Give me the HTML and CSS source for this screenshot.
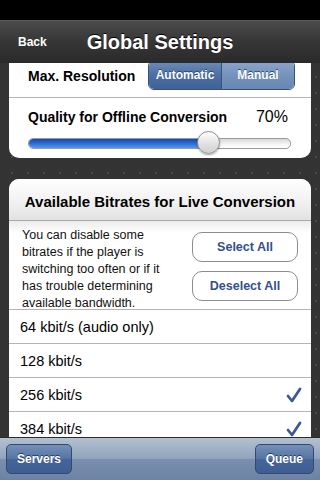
FILE: index.html
```html
<!DOCTYPE html>
<html lang="en">
<head>
    <meta charset="UTF-8">
    <meta name="viewport" content="width=device-width, initial-scale=1.0">
    <title>Global Settings</title>
    <link rel="stylesheet" href="styles.css">
</head>
<body>
    <div class="phone">
        <div class="status-bar"></div>

        <div class="nav-bar">
            <span class="back">Back</span>
            <h1>Global Settings</h1>
        </div>

        <div class="content">
            <div class="scroll">
                <div class="card">
                    <div class="row resolution">
                        <span class="label">Max. Resolution</span>
                        <div class="segmented">
                            <span class="seg selected">Automatic</span>
                            <span class="seg">Manual</span>
                        </div>
                    </div>
                    <div class="row quality">
                        <div class="quality-top">
                            <span class="label">Quality for Offline Conversion</span>
                            <span class="percent">70%</span>
                        </div>
                        <div class="slider">
                            <div class="track-fill" style="width: 69%;"></div>
                            <div class="thumb" style="left: 69%;"></div>
                        </div>
                    </div>
                </div>

                <div class="card bitrates">
                    <div class="card-header">Available Bitrates for Live Conversion</div>
                    <div class="intro">
                        <p>You can disable some<br>bitrates if the player is<br>switching too often or if it<br>has trouble determining<br>available bandwidth.</p>
                        <div class="intro-buttons">
                            <button>Select All</button>
                            <button>Deselect All</button>
                        </div>
                    </div>
                    <div class="item">64 kbit/s (audio only)</div>
                    <div class="item">128 kbit/s</div>
                    <div class="item">256 kbit/s
                        <svg class="check" width="16" height="16" viewBox="0 0 16 16"><path d="M2 9 L6 14 L14 2" fill="none" stroke="#3c5a96" stroke-width="2.8" stroke-linecap="round" stroke-linejoin="round"/></svg>
                    </div>
                    <div class="item">384 kbit/s
                        <svg class="check" width="16" height="16" viewBox="0 0 16 16"><path d="M2 9 L6 14 L14 2" fill="none" stroke="#3c5a96" stroke-width="2.8" stroke-linecap="round" stroke-linejoin="round"/></svg>
                    </div>
                </div>
            </div>
        </div>

        <div class="toolbar">
            <button>Servers</button>
            <button>Queue</button>
        </div>
    </div>
</body>
</html>
```

FILE: styles.css
```css
body {
    margin: 0;
    font-family: "Liberation Sans", Arial, sans-serif;
    background-color: #000000;
}

.phone {
    width: 320px;
    height: 480px;
    display: flex;
    flex-direction: column;
    overflow: hidden;
}

.status-bar {
    height: 20px;
    background-color: #000000;
}

.nav-bar {
    height: 43px;
    display: flex;
    align-items: center;
    justify-content: center;
    position: relative;
    background: linear-gradient(#4b4b4b, #363636 50%, #2a2a2a);
    border-top: 1px solid #5a5a5a;
    box-sizing: border-box;
    color: #ffffff;
}

.back {
    position: absolute;
    left: 18px;
    top: 14px;
    font-size: 12px;
    font-weight: bold;
}

.nav-bar h1 {
    margin: 0;
    font-size: 20px;
    font-weight: bold;
    text-shadow: 0 -1px 0 #000000;
}

.content {
    flex: 1;
    overflow: hidden;
    background-color: #333333;
    background-image: radial-gradient(circle, #4a4a4a 1px, transparent 1.5px);
    background-size: 16px 16px;
    background-position: 4px 6px;
}

.scroll {
    margin-top: -9px;
    padding: 0 9px;
}

.card {
    background-color: #ffffff;
    border-radius: 10px;
    overflow: hidden;
    margin-bottom: 21px;
}

.row {
    border-bottom: 1px solid #b4b4b4;
    box-sizing: border-box;
}

.row:last-child {
    border-bottom: none;
}

.label {
    font-size: 14px;
    font-weight: bold;
    color: #000000;
}

.resolution {
    height: 44px;
    display: flex;
    align-items: center;
    justify-content: space-between;
    padding: 0 16px 0 19px;
}

.segmented {
    display: flex;
    width: 147px;
    height: 30px;
    border: 1px solid #35517c;
    border-radius: 6px;
    overflow: hidden;
    box-sizing: border-box;
    margin-top: -1px;
}

.seg {
    flex: 1;
    display: flex;
    align-items: center;
    justify-content: center;
    font-size: 12px;
    font-weight: bold;
    color: #ffffff;
    text-shadow: 0 -1px 0 #2c4672;
    background: linear-gradient(#8ca6c9, #7593bc 50%, #6787b4);
}

.seg.selected {
    background: linear-gradient(#6f8dba, #4d6fa2 50%, #3e6299);
    border-right: 1px solid #35517c;
}

.quality {
    height: 60px;
    padding: 10px 20px 0 19px;
}

.quality-top {
    display: flex;
    justify-content: space-between;
    align-items: baseline;
}

.percent {
    font-size: 16px;
    color: #000000;
    margin-right: 3px;
}

.slider {
    position: relative;
    height: 9px;
    margin-top: 12px;
    border: 1px solid #9a9a9a;
    border-radius: 5px;
    background: linear-gradient(#d8d8d8, #f6f6f6 60%, #ffffff);
}

.track-fill {
    height: 100%;
    border-radius: 5px 0 0 5px;
    background: linear-gradient(#134aa8, #2f72d6 55%, #5b95e6);
}

.thumb {
    position: absolute;
    top: -8px;
    width: 23px;
    height: 23px;
    margin-left: -12px;
    border-radius: 50%;
    box-sizing: border-box;
    border: 1px solid #8f8f8f;
    background: linear-gradient(#ffffff, #e4e4e4 50%, #cfcfcf);
    box-shadow: 0 1px 2px rgba(0, 0, 0, 0.35);
}

.card-header {
    height: 42px;
    display: flex;
    align-items: center;
    justify-content: center;
    padding-top: 3px;
    font-size: 15px;
    font-weight: bold;
    background: linear-gradient(#ffffff, #f0f0f0 60%, #e2e2e2);
    border-bottom: 1px solid #a8a8a8;
    box-sizing: border-box;
}

.intro {
    display: flex;
    justify-content: space-between;
    padding: 6px 13px 0 13px;
    height: 89px;
    box-sizing: border-box;
    border-bottom: 1px solid #b4b4b4;
    background: linear-gradient(#ececec, #ffffff 12px);
}

.intro p {
    margin: 0;
    font-size: 12.5px;
    line-height: 17px;
    color: #111111;
    white-space: nowrap;
}

.intro-buttons {
    display: flex;
    flex-direction: column;
    gap: 9px;
    padding-top: 5px;
}

.intro-buttons button {
    width: 106px;
    height: 30px;
    border: 1px solid #8c8c8c;
    border-radius: 10px;
    background-color: #ffffff;
    font-family: "Liberation Sans", Arial, sans-serif;
    font-size: 12.5px;
    font-weight: bold;
    color: #34508a;
    padding: 0;
}

.item {
    height: 34px;
    display: flex;
    align-items: center;
    justify-content: space-between;
    padding: 0 9px 0 11px;
    font-size: 14.5px;
    color: #000000;
    border-bottom: 1px solid #b4b4b4;
    box-sizing: border-box;
}

.check {
    display: block;
}

.toolbar {
    height: 43px;
    display: flex;
    justify-content: space-between;
    align-items: center;
    padding: 0 6px;
    background: linear-gradient(#b3c0d1, #91a3bb 50%, #7a8faf 51%, #6d83a3);
    border-top: 1px solid #2c2c2c;
    box-sizing: border-box;
}

.toolbar button {
    height: 30px;
    padding: 0 10px;
    border: 1px solid #34496d;
    border-radius: 5px;
    background: linear-gradient(#7590b8, #5574a2 50%, #46659a 51%, #3f5e92);
    color: #ffffff;
    font-family: "Liberation Sans", Arial, sans-serif;
    font-size: 12px;
    font-weight: bold;
    text-shadow: 0 -1px 0 #26395a;
}
```
